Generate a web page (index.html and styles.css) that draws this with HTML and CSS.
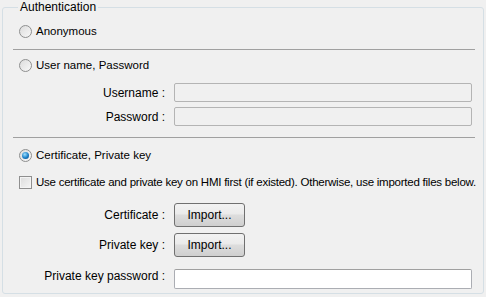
FILE: index.html
```html
<!DOCTYPE html>
<html lang="en">
<head>
  <meta charset="UTF-8" />
  <title>Authentication</title>
  <link rel="stylesheet" href="styles.css">
</head>
<body>

  <fieldset class="group">
    <legend>Authentication</legend>

    <label class="option row-anon">
      <span class="radio"></span>Anonymous
    </label>

    <div class="sep sep-1"></div>

    <label class="option row-user">
      <span class="radio"></span>User name, Password
    </label>

    <div class="fields fields-user">
      <span class="field-label">Username :</span>
      <span class="textbox disabled"></span>
      <span class="field-label">Password :</span>
      <span class="textbox disabled"></span>
    </div>

    <div class="sep sep-2"></div>

    <label class="option row-cert">
      <span class="radio checked"></span>Certificate, Private key
    </label>

    <label class="option row-check">
      <span class="checkbox"></span>Use certificate and private key on HMI first (if existed). Otherwise, use imported files below.
    </label>

    <div class="fields fields-cert">
      <span class="field-label">Certificate :</span>
      <span><button class="btn">Import...</button></span>
      <span class="field-label">Private key :</span>
      <span><button class="btn">Import...</button></span>
      <span class="field-label">Private key password :</span>
      <span class="textbox"></span>
    </div>
  </fieldset>

</body>
</html>
```

FILE: styles.css
```css
body {
  margin: 0;
  background: #f0f0f0;
  font-family: 'Liberation Sans', Arial, sans-serif;
  font-size: 11.5px;
  color: #000;
  width: 486px;
  height: 297px;
  overflow: hidden;
}

.group {
  margin: 0 2px;
  padding: 9px 6px 0 16px;
  border: 1px solid #d5dfe5;
  border-radius: 3px;
  height: 294px;
  box-sizing: border-box;
}

.group legend {
  padding: 0 2px;
  margin-left: -1px;
  line-height: 14px;
  font-size: 12px;
}

.option {
  display: flex;
  align-items: center;
  height: 16px;
  line-height: 16px;
  white-space: nowrap;
}

.row-check {
  letter-spacing: -0.24px;
}

.radio,
.checkbox {
  width: 13px;
  height: 13px;
  box-sizing: border-box;
  border: 1px solid #8e8f8f;
  background: linear-gradient(135deg, #dcdcdc, #f8f8f8);
  margin-right: 4px;
  flex: none;
  position: relative;
}

.radio {
  border-radius: 50%;
}

.radio.checked::after {
  content: "";
  position: absolute;
  left: 2px;
  top: 2px;
  width: 7px;
  height: 7px;
  border-radius: 50%;
  background: radial-gradient(circle at 40% 35%, #9ee0ff, #1a7fc7 55%, #0b3f78);
}

.checkbox {
  border-color: #8f8f8f;
  background: linear-gradient(135deg, #dcdcdc, #f6f6f6);
  box-shadow: inset 0 0 0 1px #f4f4f4;
}

.sep {
  height: 1px;
  background: #a0a0a0;
  margin-left: -6px;
  margin-right: 2px;
}

.sep-1 { margin-top: 10px; }
.row-user { margin-top: 7px; }

.fields {
  display: grid;
  grid-template-columns: 146px 298px;
  column-gap: 9px;
  align-items: center;
}

.field-label {
  text-align: right;
  font-size: 12px;
}

.fields-user {
  margin-top: 10px;
  row-gap: 5px;
}

.textbox {
  display: block;
  height: 19px;
  box-sizing: border-box;
  border: 1px solid #abadb3;
  border-top-color: #a0a0a0;
  background: #fff;
  border-radius: 2px;
}

.textbox.disabled {
  background: #f0f0f0;
  border-color: #b4b4b4;
}

.sep-2 { margin-top: 11px; }
.row-cert { margin-top: 9px; }
.row-check { margin-top: 11px; }

.fields-cert {
  margin-top: 13px;
  row-gap: 6px;
}

.btn {
  display: block;
  width: 71px;
  height: 24px;
  border: 1px solid #707070;
  border-radius: 3px;
  background: linear-gradient(#f2f2f2 0%, #ebebeb 45%, #dddddd 50%, #cfcfcf 100%);
  font-family: inherit;
  font-size: 12px;
  padding: 0;
  color: #000;
}

.fields-cert .textbox {
  margin-top: 6px;
  height: 20px;
}
```
